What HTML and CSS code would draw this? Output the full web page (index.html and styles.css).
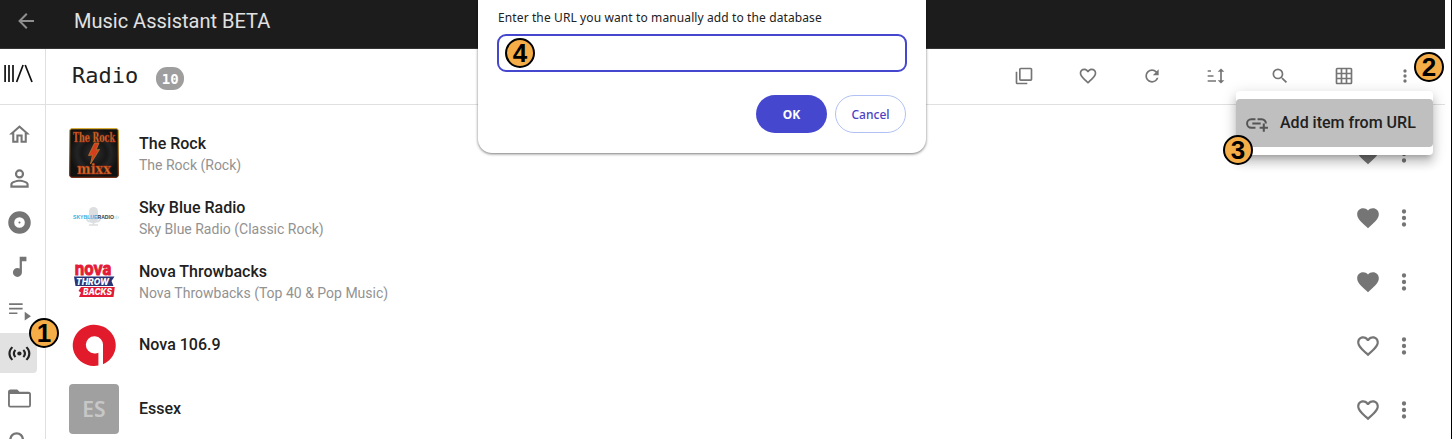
FILE: index.html
```html
<!DOCTYPE html>
<html lang="en">
<head>
<meta charset="utf-8">
<title>Music Assistant BETA</title>
<link rel="stylesheet" href="styles.css">
</head>
<body>
<svg class="defs" aria-hidden="true">
  <symbol id="heart" viewBox="0 0 24 24"><path d="M12 21.35L10.55 20.03C5.4 15.36 2 12.27 2 8.5C2 5.41 4.42 3 7.5 3C9.24 3 10.91 3.81 12 5.08C13.09 3.81 14.76 3 16.5 3C19.58 3 22 5.41 22 8.5C22 12.27 18.6 15.36 13.45 20.03L12 21.35Z"/></symbol>
  <symbol id="heart-outline" viewBox="0 0 24 24"><path d="M12.1 18.55L12 18.65L11.89 18.55C7.14 14.24 4 11.39 4 8.5C4 6.5 5.5 5 7.5 5C9.04 5 10.54 6 11.07 7.36H12.93C13.46 6 14.96 5 16.5 5C18.5 5 20 6.5 20 8.5C20 11.39 16.86 14.24 12.1 18.55M16.5 3C14.76 3 13.09 3.81 12 5.08C10.91 3.81 9.24 3 7.5 3C4.42 3 2 5.41 2 8.5C2 12.27 5.4 15.36 10.55 20.03L12 21.35L13.45 20.03C18.6 15.36 22 12.27 22 8.5C22 5.41 19.58 3 16.5 3Z"/></symbol>
  <symbol id="dots" viewBox="0 0 24 24"><path d="M12 16A2 2 0 1 1 12 20A2 2 0 1 1 12 16M12 10A2 2 0 1 1 12 14A2 2 0 1 1 12 10M12 4A2 2 0 1 1 12 8A2 2 0 1 1 12 4Z"/></symbol>
</svg>
<div class="app">
  <header class="topbar">
    <svg class="back" viewBox="0 0 24 24"><path d="M20 11V13H8L13.5 18.5L12.08 19.92L4.16 12L12.08 4.08L13.5 5.5L8 11H20Z"/></svg>
    <h1 class="brand">Music Assistant BETA</h1>
  </header>
  <div class="body">
    <nav class="sidebar">
      <div class="logo"><svg viewBox="0 0 32 20"><path d="M1.1 1V18M5 1V18M9 1V18M12.6 18L19.1 1M21.2 1L28 18"/></svg></div>
      <a class="nav"><svg viewBox="0 0 24 24"><path d="M12 5.69L17 10.19V18H15V12H9V18H7V10.19L12 5.69M12 3L2 12H5V20H11V14H13V20H19V12H22"/></svg></a>
      <a class="nav"><svg viewBox="0 0 24 24"><path d="M12 4A4 4 0 1 1 12 12A4 4 0 1 1 12 4M12 5.9A2.1 2.1 0 1 0 12 10.1A2.1 2.1 0 1 0 12 5.9M12 13C14.67 13 20 14.33 20 17V20H4V17C4 14.33 9.33 13 12 13M12 14.9C9.03 14.9 5.9 16.36 5.9 17V18.1H18.1V17C18.1 16.36 14.97 14.9 12 14.9Z" transform="translate(-1.2 -1.2) scale(1.1)"/></svg></a>
      <a class="nav"><svg viewBox="0 0 24 24"><path d="M12 11A1 1 0 1 0 12 13A1 1 0 1 0 12 11M12 17.1A5.1 5.1 0 1 1 12 6.9A5.1 5.1 0 1 1 12 17.1M12 1.2A10.8 10.8 0 1 0 12 22.8A10.8 10.8 0 1 0 12 1.2Z"/></svg></a>
      <a class="nav"><svg viewBox="0 0 24 24"><path d="M12 3V13.55C11.41 13.21 10.73 13 10 13A4 4 0 1 0 14 17V7H18V3H12Z" transform="translate(-.8 -.7) scale(1.08)"/></svg></a>
      <a class="nav playlist"><svg viewBox="0 0 24 24"><path d="M2 5H15V6.6H2M2 9.4H15V11H2M2 13.8H10V15.4H2M17 13.3V21.7L23 17.5Z"/></svg></a>
      <a class="nav active"><svg viewBox="0 0 24 24"><path d="M12 10A2 2 0 1 1 12 14A2 2 0 1 1 12 10M4.93 4.93C3.12 6.74 2 9.24 2 12S3.12 17.26 4.93 19.07L6.34 17.66C4.89 16.22 4 14.22 4 12C4 9.79 4.89 7.78 6.34 6.34L4.93 4.93M19.07 4.93L17.66 6.34C19.11 7.79 20 9.79 20 12C20 14.22 19.11 16.22 17.66 17.66L19.07 19.07C20.88 17.26 22 14.76 22 12S20.88 6.74 19.07 4.93M7.76 7.76C6.67 8.85 6 10.35 6 12S6.67 15.15 7.76 16.24L9.17 14.83C8.45 14.11 8 13.11 8 12S8.45 9.89 9.17 9.17L7.76 7.76M16.24 7.76L14.83 9.17C15.55 9.89 16 10.89 16 12S15.55 14.11 14.83 14.83L16.24 16.24C17.33 15.15 18 13.65 18 12S17.33 8.85 16.24 7.76Z" transform="translate(-.8 -.5) scale(1.1 1)"/></svg></a>
      <a class="nav"><svg viewBox="0 0 24 24"><path d="M20.4 18.4H3.6V8H20.4M20 6H12L10 4H4C2.89 4 2 4.89 2 6V18A2 2 0 0 0 4 20H20A2 2 0 0 0 22 18V8C22 6.89 21.1 6 20 6Z" transform="translate(-1.2 -1) scale(1.1 1.08)"/></svg></a>
      <a class="nav"><svg viewBox="0 0 24 24"><path d="M9.5 3A6.5 6.5 0 0 1 16 9.5C16 11.11 15.41 12.59 14.44 13.73L14.71 14H15.5L20.5 19L19 20.5L14 15.5V14.71L13.73 14.44C12.59 15.41 11.11 16 9.5 16A6.5 6.5 0 0 1 9.5 3M9.5 5C7 5 5 7 5 9.5S7 14 9.5 14S14 12 14 9.5S12 5 9.5 5Z" transform="translate(-1.2 -1.2) scale(1.1)"/></svg></a>
    </nav>
    <main class="content">
      <div class="toolbar">
        <h2 class="title">Radio</h2>
        <span class="count">10</span>
        <div class="tools">
          <svg viewBox="0 0 24 24"><path d="M20 16H8V4H20M22 16V4C22 2.89 21.1 2 20 2H8C6.89 2 6 2.89 6 4V16A2 2 0 0 0 8 18H20A2 2 0 0 0 22 16M16 20V22H4A2 2 0 0 1 2 20V7H4V20H16Z"/></svg>
          <svg><use href="#heart-outline"/></svg>
          <svg viewBox="0 0 24 24"><path d="M17.65 6.35C16.2 4.9 14.21 4 12 4A8 8 0 1 0 19.73 14H17.65C16.83 16.33 14.61 18 12 18A6 6 0 1 1 12 6C13.66 6 15.14 6.69 16.22 7.78L13 11H20V4L17.65 6.35Z"/></svg>
          <svg viewBox="0 0 24 24"><path d="M19 17H22L18 21L14 17H17V7H14L18 3L22 7H19M6 5V7H2V5M9 11V13H2V11M12 17V19H2V17Z"/></svg>
          <svg viewBox="0 0 24 24"><path d="M9.5 3A6.5 6.5 0 0 1 16 9.5C16 11.11 15.41 12.59 14.44 13.73L14.71 14H15.5L20.5 19L19 20.5L14 15.5V14.71L13.73 14.44C12.59 15.41 11.11 16 9.5 16A6.5 6.5 0 0 1 9.5 3M9.5 5C7 5 5 7 5 9.5S7 14 9.5 14S14 12 14 9.5S12 5 9.5 5Z"/></svg>
          <svg viewBox="0 0 24 24"><path d="M10 4V8H14V4H10M16 4V8H20V4H16M16 10V14H20V10H16M16 16V20H20V16H16M14 20V16H10V20H14M8 20V16H4V20H8M8 14V10H4V14H8M8 8V4H4V8H8M10 14H14V10H10V14M4 2H20A2 2 0 0 1 22 4V20A2 2 0 0 1 20 22H4C2.92 22 2 21.1 2 20V4A2 2 0 0 1 4 2Z"/></svg>
          <svg class="more"><use href="#dots"/></svg>
        </div>
      </div>
      <div class="list">
        <div class="row">
          <svg class="art" viewBox="0 0 50 50"><defs><radialGradient id="vinyl"><stop offset="0" stop-color="#303030"/><stop offset=".5" stop-color="#171717"/><stop offset=".7" stop-color="#242424"/><stop offset="1" stop-color="#111"/></radialGradient><linearGradient id="frame" x2="0" y2="1"><stop offset="0" stop-color="#d8ac38"/><stop offset="1" stop-color="#783018"/></linearGradient></defs>
            <rect x=".6" y=".6" width="48.8" height="48.8" rx="2" fill="url(#vinyl)" stroke="url(#frame)" stroke-width="1.3"/>
            <g class="rock"><text x="4" y="14.2" font-size="12" textLength="42" lengthAdjust="spacingAndGlyphs">The Rock</text><text x="8" y="45.8" font-size="15" textLength="34" lengthAdjust="spacingAndGlyphs">mixx</text></g>
            <path d="M25.5 15H30L27 22L30.5 21.5L21.5 36L23.5 27L19.5 27.5Z" fill="#d43e1c" stroke="#b8792d" stroke-width=".8"/></svg>
          <div class="text"><div class="name">The Rock</div><div class="sub">The Rock (Rock)</div></div>
          <svg class="fav"><use href="#heart"/></svg><svg class="menu-dots"><use href="#dots"/></svg>
        </div>
        <div class="row">
          <svg class="art" viewBox="0 0 50 50"><rect x="20" y="15" width="9" height="16" rx="4.5" fill="#dcdee0"/><path d="M18 24V27Q18 30 24.5 30T31 27V24M24.5 30V33M20 33H29" fill="none" stroke="#dcdee0" stroke-width="1.7"/>
            <text class="sky" x="4" y="27.4" textLength="41" lengthAdjust="spacingAndGlyphs"><tspan fill="#3eace0">SKYBLUE</tspan><tspan fill="#353c42">RADIO</tspan></text><path d="M46 24V27M47.8 23.5V27.5M49.4 24.5V26.5" stroke="#afdaed" stroke-width=".8"/></svg>
          <div class="text"><div class="name">Sky Blue Radio</div><div class="sub">Sky Blue Radio (Classic Rock)</div></div>
          <svg class="fav"><use href="#heart"/></svg><svg class="menu-dots"><use href="#dots"/></svg>
        </div>
        <div class="row">
          <svg class="art" viewBox="0 0 50 50"><text x="5.8" y="18.8" class="nova" textLength="36.5" lengthAdjust="spacingAndGlyphs">nova</text>
            <path d="M5 20.5H45.5L42.5 25L44.5 30H6.5Z" fill="#293477"/><path d="M12 31H45.8L44.5 41H10L12 36.5L9.5 35Z" fill="#e31b35"/>
            <text x="7" y="28.5" class="throw" font-size="9" textLength="33" lengthAdjust="spacingAndGlyphs">THROW</text><text x="14" y="39.3" class="throw" font-size="9" textLength="29" lengthAdjust="spacingAndGlyphs">BACKS</text></svg>
          <div class="text"><div class="name">Nova Throwbacks</div><div class="sub">Nova Throwbacks (Top 40 &amp; Pop Music)</div></div>
          <svg class="fav"><use href="#heart"/></svg><svg class="menu-dots"><use href="#dots"/></svg>
        </div>
        <div class="row">
          <svg class="art" viewBox="0 0 50 50"><path d="M34 44.2V25.5A8.6 8.6 0 1 0 25.4 33.4Q27.8 33.6 29.4 32.8V45.6A21.5 20.6 0 1 1 34 44.2Z" fill="#e11b2b"/></svg>
          <div class="text"><div class="name">Nova 106.9</div></div>
          <svg class="fav"><use href="#heart-outline"/></svg><svg class="menu-dots"><use href="#dots"/></svg>
        </div>
        <div class="row">
          <div class="art initials">ES</div>
          <div class="text"><div class="name">Essex</div></div>
          <svg class="fav"><use href="#heart-outline"/></svg><svg class="menu-dots"><use href="#dots"/></svg>
        </div>
      </div>
    </main>
  </div>
  <div class="dropdown"><div class="option">
    <svg viewBox="0 0 24 24"><path d="M7 7H11V8.9H7A3.1 3.1 0 0 0 7 15.1H11V17H7A5 5 0 0 1 7 7M17 7H13V8.9H17C18.71 8.9 20.1 10.29 20.1 12H22A5 5 0 0 0 17 7M8 11V13H16V11M18 12H20V15H23V17H20V20H18V17H15V15H18Z"/></svg>
    <span>Add item from URL</span></div></div>
  <div class="dialog">
    <label class="prompt">Enter the URL you want to manually add to the database</label>
    <div class="field"></div>
    <div class="actions"><button class="ok">OK</button><button class="cancel">Cancel</button></div>
  </div>
  <span class="step one">1</span><span class="step two">2</span><span class="step three">3</span><span class="step four">4</span>
</div>
</body>
</html>
```
FILE: styles.css
```css
* { box-sizing: border-box; }
body { margin: 0; background: #fff; font-family: Roboto, sans-serif; color: #212121; }
svg { display: block; flex: none; }
.defs { position: absolute; width: 0; height: 0; }
.app { position: relative; width: 1452px; height: 439px; overflow: hidden; border-right: 1px solid #000; padding-right: 6px; }
.topbar { height: 49px; background: #1c1c1c; border-bottom: 1px solid #353535; display: flex; align-items: center; padding: 0 0 6px 14px; }
.back { width: 24px; height: 24px; fill: #8f8f8f; }
.brand { margin: 0 0 0 36px; font-size: 20px; font-weight: 400; line-height: 28px; color: #e1e1e1; }
.body { display: flex; height: 390px; }
.sidebar { width: 46px; flex: none; border-right: 1px solid #e0e0e0; overflow: hidden; }
.logo { height: 56px; border-bottom: 1px solid #e0e0e0; padding: 15px 0 0 4px; margin-bottom: 8px; }
.logo svg { width: 32px; height: 20px; fill: none; stroke: #111; stroke-width: 1.7; }
.nav { display: flex; align-items: center; width: 37px; height: 40px; margin-bottom: 4px; padding: 2px 0 0 7px; border-radius: 0 4px 4px 0; }
.nav svg { width: 25px; height: 25px; fill: #757575; }
.nav.active { background: #e2e2e2; }
.nav.active svg { width: 24px; height: 24px; fill: #222; }
.content { flex: 1; min-width: 0; }
.toolbar { height: 56px; border-bottom: 1px solid #e0e0e0; display: flex; align-items: center; padding: 0 30px 2px 26px; }
.title { margin: 1px 0 0; font: 400 22px/28px "DejaVu Sans Mono", monospace; }
.count { margin: 6px 0 0 18px; width: 28px; height: 23px; border-radius: 11px; background: #9e9e9e; color: #fff; font: 700 14px/24px "DejaVu Sans Mono", monospace; text-align: center; }
.tools { margin-left: auto; display: flex; gap: 44px; }
.tools svg { width: 20px; height: 20px; fill: #757575; }
.tools .more { margin-left: -3px; }
.list { padding-top: 16px; }
.row { display: flex; align-items: center; height: 64px; padding: 0 28px 0 23px; }
.art { width: 50px; height: 50px; border-radius: 4px; flex: none; }
.initials { background: #a0a0a0; color: #c7c7c7; font: 600 21px/50px "Noto Sans", sans-serif; text-align: center; }
.text { flex: 1; padding-left: 20px; }
.name { font-size: 16px; font-weight: 500; line-height: 20px; }
.name:not(:only-child) { padding-top: 2px; }
.sub { font-size: 14px; line-height: 20px; padding-top: 1px; color: #929292; }
.fav { width: 26px; height: 26px; margin-top: 2px; fill: #757575; }
.menu-dots { width: 26px; height: 26px; margin: 2px 0 0 10px; fill: #757575; }
.rock { font-family: "DejaVu Serif", serif; font-weight: 700; fill: #d07028; stroke: #a92c15; stroke-width: .5; }
.sky { font: 700 5.5px "Liberation Sans", sans-serif; }
.nova { font: 700 18px Inter, sans-serif; fill: #e31b35; stroke: #e31b35; stroke-width: 1; }
.throw { font-family: Inter, sans-serif; font-weight: 800; font-style: italic; fill: #fff; }
.dropdown { position: absolute; left: 1236px; top: 91px; width: 197px; height: 64px; padding: 8px 0; background: #fff; border-radius: 4px; box-shadow: 0 5px 5px -3px #0003, 0 8px 10px 1px #00000024, 0 3px 14px 2px #0000001f; }
.option { display: flex; align-items: center; height: 48px; padding-left: 8px; border-radius: 4px; background: #bfbfbf; }
.option svg { width: 25px; height: 25px; fill: #555; }
.option span { margin: -2px 0 0 11px; font-size: 16px; font-weight: 500; white-space: nowrap; }
.dialog { position: absolute; left: 478px; top: 0; width: 448px; height: 153px; padding: 8px 20px 20px; background: #fff; border-radius: 0 0 14px 14px; box-shadow: 0 1px 3px #0008; font-family: "Noto Sans", sans-serif; }
.prompt { display: block; font-size: 12px; letter-spacing: .11px; line-height: 20px; height: 26px; white-space: nowrap; }
.field { width: 410px; height: 38px; margin-left: -1px; border: 2px solid #4547cf; border-radius: 9px; }
.actions { display: flex; justify-content: flex-end; gap: 8px; margin-top: 23px; }
.actions button { width: 71px; height: 38px; border-radius: 19px; padding: 0; font: 500 12px "Noto Sans", sans-serif; }
.ok { background: #4547cf; color: #fff; border: 0; }
.actions .ok { font-weight: 700; }
.cancel { background: #fff; color: #4d41c4; border: 1px solid #b1c1f5; }
.step { position: absolute; width: 30px; height: 30px; border-radius: 50%; border: 2px solid #000; background: #f5ad47; color: #000; font: 700 26px/26px "Liberation Sans", sans-serif; text-align: center; }
.one { left: 29px; top: 318px; }
.two { left: 1414px; top: 52px; }
.three { left: 1223px; top: 135px; }
.four { left: 505px; top: 38px; }
```
